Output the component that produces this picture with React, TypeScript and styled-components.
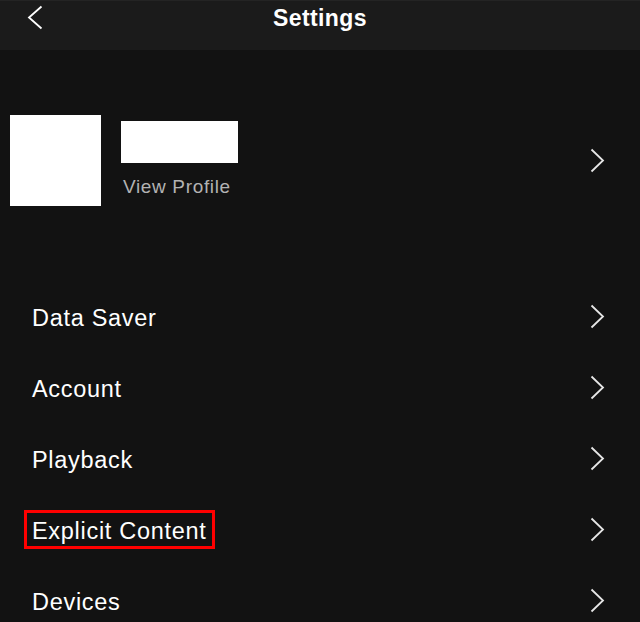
import React from "react";
import styled, { createGlobalStyle } from "styled-components";

const Global = createGlobalStyle`
  html, body { margin: 0; padding: 0; background: #121212; }
  body { font-family: "Liberation Sans", Arial, sans-serif; -webkit-font-smoothing: antialiased; }
`;

const Screen = styled.div`
  width: 640px;
  height: 622px;
  overflow: hidden;
  background: #121212;
  color: #fff;
  display: flex;
  flex-direction: column;
`;

const Header = styled.header`
  height: 50px;
  flex: none;
  background: #1b1b1b;
  border-top: 1px solid #242424;
  box-sizing: border-box;
  display: grid;
  grid-template-columns: 60px 1fr 60px;
  align-items: start;
`;

const BackButton = styled.button`
  background: none;
  border: 0;
  padding: 4px 0 0 27px;
  margin: 0;
  display: flex;
  cursor: pointer;
`;

const Title = styled.h1`
  margin: 0;
  padding-top: 4px;
  text-align: center;
  font-size: 23px;
  font-weight: 700;
  letter-spacing: 0.4px;
  line-height: 26px;
`;

const ProfileRow = styled.div`
  display: flex;
  align-items: center;
  padding: 65px 35px 75px 10px;
`;

const Avatar = styled.div`
  width: 91px;
  height: 91px;
  background: #fff;
  flex: none;
`;

const ProfileInfo = styled.div`
  display: flex;
  flex-direction: column;
  margin-left: 20px;
  flex: 1;
  align-self: flex-start;
  padding-top: 6px;
`;

const NameBar = styled.div`
  width: 117px;
  height: 42px;
  background: #fff;
`;

const ViewProfile = styled.span`
  margin-top: 13px;
  margin-left: 2px;
  color: #b3b3b3;
  font-size: 19px;
  letter-spacing: 0.65px;
  line-height: 22px;
`;

const List = styled.ul`
  list-style: none;
  margin: 0;
  padding: 0;
`;

const Row = styled.li`
  height: 71px;
  display: flex;
  align-items: center;
  justify-content: space-between;
  padding: 0 35px 0 32px;
`;

const Label = styled.span<{ $marked?: boolean }>`
  font-size: 23.5px;
  letter-spacing: 0.7px;
  line-height: 28px;
  padding-top: 2px;
  color: #fff;
  ${(p) =>
    p.$marked &&
    `
    border: 3px solid #ff0000;
    padding: 4px 6px 1px 5px;
    margin-left: -8px;
  `}
`;

const Chevron = ({ dir = "right" }: { dir?: "left" | "right" }) =>
  dir === "right" ? (
    <svg width="15" height="25" viewBox="0 0 15 25" fill="none">
      <polyline points="1.5,1.5 13,12.5 1.5,23.5" stroke="#e6e6e6" strokeWidth="1.8" />
    </svg>
  ) : (
    <svg width="16" height="25" viewBox="0 0 16 25" fill="none">
      <polyline points="14.5,1.5 2,12.5 14.5,23.5" stroke="#fff" strokeWidth="1.8" />
    </svg>
  );

const items = ["Data Saver", "Account", "Playback", "Explicit Content", "Devices"];

export default function App() {
  return (
    <>
      <Global />
      <Screen>
        <Header>
          <BackButton aria-label="Back">
            <Chevron dir="left" />
          </BackButton>
          <Title>Settings</Title>
          <div />
        </Header>
        <ProfileRow>
          <Avatar />
          <ProfileInfo>
            <NameBar />
            <ViewProfile>View Profile</ViewProfile>
          </ProfileInfo>
          <Chevron />
        </ProfileRow>
        <List>
          {items.map((item) => (
            <Row key={item}>
              <Label $marked={item === "Explicit Content"}>{item}</Label>
              <Chevron />
            </Row>
          ))}
        </List>
      </Screen>
    </>
  );
}
